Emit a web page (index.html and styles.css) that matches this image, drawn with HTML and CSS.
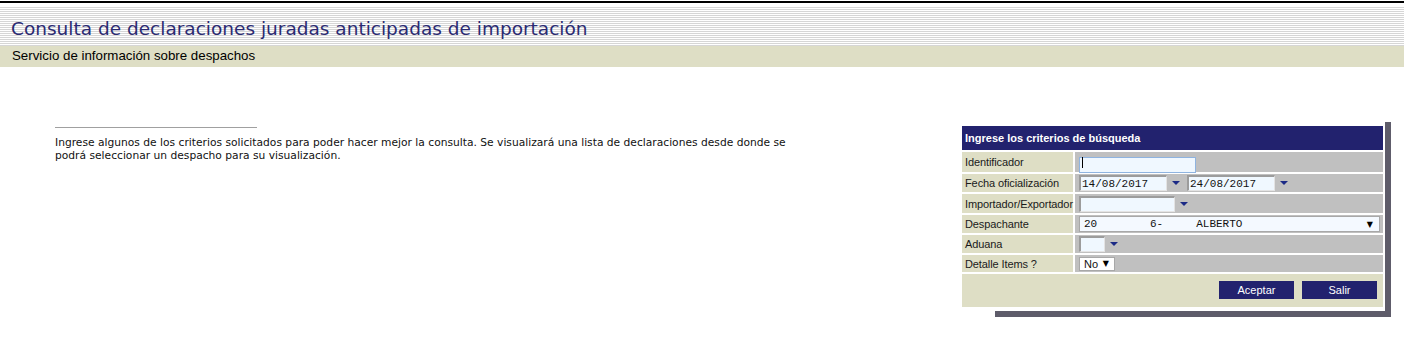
FILE: index.html
```html
<!DOCTYPE html>
<html lang="es">
<head>
    <meta charset="UTF-8">
    <title>Consulta de declaraciones juradas anticipadas de importación</title>
    <link rel="stylesheet" href="styles.css">
</head>
<body>
    <div class="topline"></div>
    <div class="titlebar">
        <h1>Consulta de declaraciones juradas anticipadas de importación</h1>
    </div>
    <div class="subbar">Servicio de información sobre despachos</div>

    <div class="content">
        <div class="intro">
            <hr>
            <p>Ingrese algunos de los criterios solicitados para poder hacer mejor la consulta. Se visualizará una lista de declaraciones desde donde se podrá seleccionar un despacho para su visualización.</p>
        </div>

        <div class="panelWrap">
            <form class="panel">
                <div class="panelHead">Ingrese los criterios de búsqueda</div>

                <div class="lbl">Identificador</div>
                <div class="val">
                    <span class="focused"><input type="text" class="fld fldId"></span>
                </div>

                <div class="lbl">Fecha oficialización</div>
                <div class="val">
                    <input type="text" class="fld fldFecha" value="14/08/2017">
                    <span class="arrow"></span>
                    <input type="text" class="fld fldFecha" value="24/08/2017">
                    <span class="arrow"></span>
                </div>

                <div class="lbl">Importador/Exportador</div>
                <div class="val">
                    <input type="text" class="fld fldImp">
                    <span class="arrow"></span>
                </div>

                <div class="lbl">Despachante</div>
                <div class="val">
                    <div class="combo comboDesp">
                        <span class="comboText">20        6-     ALBERTO</span>
                        <span class="comboArrow">▼</span>
                    </div>
                </div>

                <div class="lbl">Aduana</div>
                <div class="val">
                    <input type="text" class="fld fldAduana">
                    <span class="arrow"></span>
                </div>

                <div class="lbl">Detalle Items ?</div>
                <div class="val">
                    <div class="combo comboNo">
                        <span>No</span>
                        <span class="comboArrow">▼</span>
                    </div>
                </div>

                <div class="panelFoot">
                    <button type="button" class="btn">Aceptar</button>
                    <button type="button" class="btn">Salir</button>
                </div>
            </form>
        </div>
    </div>
</body>
</html>
```

FILE: styles.css
```css
* {
    margin: 0;
    padding: 0;
    box-sizing: border-box;
}

body {
    background-color: #ffffff;
    font-family: "Liberation Sans", Arial, sans-serif;
    color: #111111;
}

.topline {
    height: 2px;
    margin-top: 1px;
    background-color: #000000;
}

.titlebar {
    margin-top: 4px;
    height: 39px;
    padding: 4px 0 0 11px;
    background: repeating-linear-gradient(to bottom, #d6d6d6 0, #d6d6d6 1px, #ffffff 1px, #ffffff 2px);
}

h1 {
    font-family: "DejaVu Sans", Verdana, sans-serif;
    font-weight: normal;
    font-size: 18.5px;
    line-height: 35px;
    color: #2a2a72;
}

.subbar {
    height: 21px;
    padding-left: 12px;
    background-color: #dedec5;
    font-size: 13.3px;
    line-height: 19px;
    color: #000000;
}

.content {
    display: flex;
    justify-content: space-between;
    align-items: flex-start;
    padding-top: 55px;
}

.intro {
    margin-left: 55px;
    padding-top: 5px;
    width: 760px;
}

hr {
    width: 202px;
    border: none;
    border-top: 1px solid #a0a0a0;
}

.intro p {
    margin-top: 8px;
    font-family: "DejaVu Sans", Verdana, sans-serif;
    font-size: 10.7px;
    line-height: 13px;
    color: #111111;
}

/* caja de criterios con su sombra */
.panelWrap {
    margin-right: 13px;
    padding: 0 6px 6px 0;
    background:
        linear-gradient(#5e5c6a, #5e5c6a) right top / 6px 100% no-repeat,
        linear-gradient(#5e5c6a, #5e5c6a) right bottom / calc(100% - 35px) 6px no-repeat;
}

.panel {
    width: 425px;
    padding: 4px 2px;
    background-color: #ffffff;
    display: grid;
    grid-template-columns: 111px 1fr;
    grid-template-rows: 24px 20px 18px 19px 18px 18px 17px 33px;
    gap: 2px;
}

.panelHead {
    grid-column: 1 / 3;
    background-color: #22226e;
    color: #ffffff;
    font-weight: bold;
    font-size: 11px;
    line-height: 24px;
    padding-left: 3px;
}

.lbl {
    background-color: #dedec5;
    font-size: 11px;
    letter-spacing: -0.1px;
    color: #1a1a1a;
    padding-left: 3px;
    display: flex;
    align-items: center;
}

.val {
    background-color: #c0c0c0;
    padding-left: 4px;
    display: flex;
    align-items: center;
}

.fld {
    height: 16px;
    background-color: #f0f8ff;
    font-family: "Liberation Mono", "Courier New", monospace;
    font-size: 11px;
    color: #111111;
    padding: 0 1px;
    border-top: 2px solid #9c9c9c;
    border-left: 2px solid #9c9c9c;
    border-right: 1px solid #e4e4e4;
    border-bottom: 1px solid #e4e4e4;
    outline: none;
}

.focused {
    position: relative;
    display: inline-block;
    height: 16px;
}

.focused::after {
    content: "";
    position: absolute;
    left: 3px;
    top: 3px;
    width: 1px;
    height: 11px;
    background-color: #000000;
}

.fldId {
    width: 117px;
    border: 1px solid #8fb4e0;
}

.fldFecha {
    width: 88px;
}

.fldImp {
    width: 96px;
}

.fldAduana {
    width: 26px;
}

.arrow {
    width: 0;
    height: 0;
    margin: 0 7px 0 5px;
    border-left: 4px solid transparent;
    border-right: 4px solid transparent;
    border-top: 4px solid #1c2a86;
}

.combo {
    display: flex;
    align-items: center;
    justify-content: space-between;
    background-color: #f4f9ff;
    border: 1px solid #a8a8a8;
}

.comboDesp {
    width: 301px;
    height: 16px;
    padding: 0 6px 0 4px;
}

.comboText {
    font-family: "Liberation Mono", "Courier New", monospace;
    font-size: 11px;
    white-space: pre;
    color: #111111;
}

.comboArrow {
    font-family: "DejaVu Sans", sans-serif;
    font-size: 8px;
    color: #000000;
}

.comboNo {
    width: 36px;
    height: 14px;
    padding: 0 5px 0 4px;
    background-color: #ffffff;
    font-size: 11px;
}

.panelFoot {
    grid-column: 1 / 3;
    background-color: #dedec5;
    display: flex;
    justify-content: flex-end;
    align-items: flex-start;
    gap: 8px;
    padding: 7px 6px 0 0;
}

.btn {
    width: 75px;
    height: 18px;
    border: none;
    background-color: #22226e;
    color: #ffffff;
    font-family: "Liberation Sans", Arial, sans-serif;
    font-size: 11px;
    cursor: pointer;
}
```
